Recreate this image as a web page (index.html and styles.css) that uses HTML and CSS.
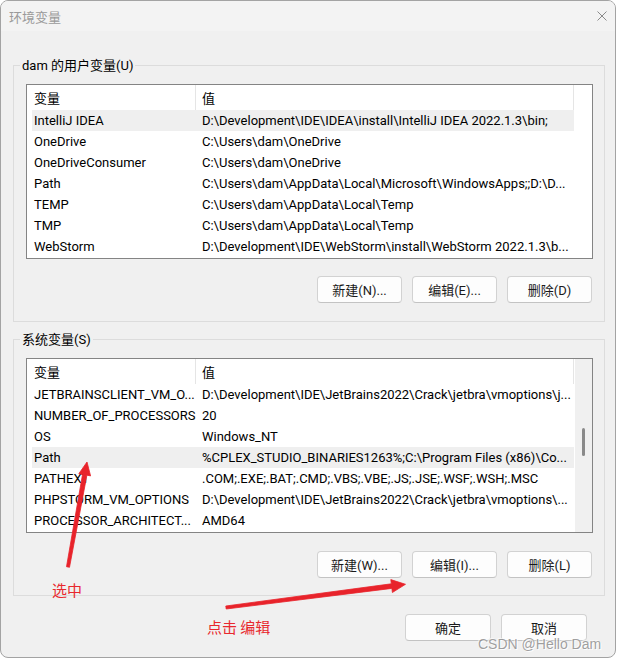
FILE: index.html
```html
<!DOCTYPE html>
<html lang="zh-CN">
<head>
<meta charset="utf-8">
<title>环境变量</title>
<link rel="stylesheet" href="styles.css">
</head>
<body>
<div class="page">
  <div class="window">
    <div class="titlebar">
      <span class="title">环境变量</span>
      <svg class="close" width="10" height="10" viewBox="0 0 10 10"><path d="M0.5 0.5 L9.5 9.5 M9.5 0.5 L0.5 9.5" stroke="#8a8a8a" stroke-width="1" fill="none"/></svg>
    </div>
    <div class="content">
      <section class="group group-user">
        <div class="group-label">dam 的用户变量(U)</div>
        <div class="listview">
          <div class="lv-main">
            <div class="lv-header"><div class="hcell c1">变量</div><div class="hcell c2">值</div></div>
            <div class="row selected"><div class="cell c1">IntelliJ IDEA</div><div class="cell c2">D:\Development\IDE\IDEA\install\IntelliJ IDEA 2022.1.3\bin;</div></div>
            <div class="row"><div class="cell c1">OneDrive</div><div class="cell c2">C:\Users\dam\OneDrive</div></div>
            <div class="row"><div class="cell c1">OneDriveConsumer</div><div class="cell c2">C:\Users\dam\OneDrive</div></div>
            <div class="row"><div class="cell c1">Path</div><div class="cell c2">C:\Users\dam\AppData\Local\Microsoft\WindowsApps;;D:\D...</div></div>
            <div class="row"><div class="cell c1">TEMP</div><div class="cell c2">C:\Users\dam\AppData\Local\Temp</div></div>
            <div class="row"><div class="cell c1">TMP</div><div class="cell c2">C:\Users\dam\AppData\Local\Temp</div></div>
            <div class="row"><div class="cell c1">WebStorm</div><div class="cell c2">D:\Development\IDE\WebStorm\install\WebStorm 2022.1.3\b...</div></div>
          </div>
          <div class="lv-scroll"></div>
        </div>
        <div class="buttons">
          <button class="btn">新建(N)...</button>
          <button class="btn">编辑(E)...</button>
          <button class="btn">删除(D)</button>
        </div>
      </section>
      <section class="group group-system">
        <div class="group-label">系统变量(S)</div>
        <div class="listview">
          <div class="lv-main">
            <div class="lv-header"><div class="hcell c1">变量</div><div class="hcell c2">值</div></div>
            <div class="row"><div class="cell c1">JETBRAINSCLIENT_VM_O...</div><div class="cell c2">D:\Development\IDE\JetBrains2022\Crack\jetbra\vmoptions\j...</div></div>
            <div class="row"><div class="cell c1">NUMBER_OF_PROCESSORS</div><div class="cell c2">20</div></div>
            <div class="row"><div class="cell c1">OS</div><div class="cell c2">Windows_NT</div></div>
            <div class="row selected"><div class="cell c1">Path</div><div class="cell c2">%CPLEX_STUDIO_BINARIES1263%;C:\Program Files (x86)\Co...</div></div>
            <div class="row"><div class="cell c1">PATHEXT</div><div class="cell c2">.COM;.EXE;.BAT;.CMD;.VBS;.VBE;.JS;.JSE;.WSF;.WSH;.MSC</div></div>
            <div class="row"><div class="cell c1">PHPSTORM_VM_OPTIONS</div><div class="cell c2">D:\Development\IDE\JetBrains2022\Crack\jetbra\vmoptions\...</div></div>
            <div class="row"><div class="cell c1">PROCESSOR_ARCHITECT...</div><div class="cell c2">AMD64</div></div>
          </div>
          <div class="lv-scroll track"><div class="thumb"></div></div>
        </div>
        <div class="buttons">
          <button class="btn">新建(W)...</button>
          <button class="btn">编辑(I)...</button>
          <button class="btn">删除(L)</button>
        </div>
      </section>
      <div class="dialog-buttons">
        <button class="btn btn-dialog">确定</button>
        <button class="btn btn-dialog">取消</button>
      </div>
    </div>
  </div>

  <svg class="annotations" width="618" height="659" viewBox="0 0 618 659">
    <polygon fill="#e8232b" stroke="#e8232b" stroke-width="0.8" stroke-linejoin="round"
      points="66.5,566.7 82.5,474.4 78.8,473.7 87,462 90.6,475.9 86.9,475.2 69.5,567.3"/>
    <polygon fill="#e8232b" stroke="#e8232b" stroke-width="0.8" stroke-linejoin="round"
      points="225.8,606 391.3,583.8 390.8,579.6 405.5,584.3 392.4,592.5 391.9,588.4 226.2,609"/>
  </svg>
  <div class="note note-select">选中</div>
  <div class="note note-click">点击 编辑</div>
  <div class="watermark">CSDN @Hello Dam</div>
</div>
</body>
</html>
```
FILE: styles.css
```css
body {
  margin: 0;
  background: #ffffff;
  font-family: Roboto, "Noto Sans CJK SC", sans-serif;
  font-size: 13px;
  color: #000;
}

.page {
  position: relative;
  width: 618px;
  height: 659px;
  overflow: hidden;
}

.window {
  width: 616px;
  height: 658px;
  box-sizing: border-box;
  border: 1px solid #a3a3a3;
  border-radius: 8px;
  background: #f0f0f0;
  overflow: hidden;
  display: flex;
  flex-direction: column;
}

.titlebar {
  height: 30px;
  flex: none;
  background: #f3f3f3;
  display: flex;
  align-items: center;
  justify-content: space-between;
  padding: 0 8px;
}

.title {
  color: #9a9a9a;
  font-size: 13px;
  font-family: "Noto Sans CJK SC", sans-serif;
}

.close {
  display: block;
}

.content {
  padding-top: 34px;
  display: flex;
  flex-direction: column;
}

.group {
  margin: 0 10px 0 12px;
  border: 1px solid #dcdcdc;
  padding: 0 11px 18px 12px;
}

.group-system {
  margin-top: 17px;
  padding-bottom: 17px;
}

.group-label {
  width: fit-content;
  height: 16px;
  line-height: 16px;
  margin: -8px 0 0 -6px;
  padding: 0 2px;
  background: #f0f0f0;
}

.listview {
  margin-top: 10px;
  height: 175px;
  box-sizing: border-box;
  border: 1px solid #848484;
  background: #fff;
  display: flex;
}

.lv-main {
  width: 547px;
  flex: none;
  overflow: hidden;
}

.lv-header {
  height: 25px;
  display: flex;
  padding-left: 5px;
}

.hcell {
  display: flex;
  align-items: center;
  box-sizing: border-box;
  border-right: 1px solid #e5e5e5;
}

.hcell.c1 {
  width: 164px;
  flex: none;
  padding-left: 2px;
}

.hcell.c2 {
  flex: 1;
  padding-left: 6px;
}

.row {
  height: 21px;
  display: flex;
  align-items: center;
  margin-left: 5px;
}

.row.selected {
  background: #efefef;
}

.cell {
  white-space: nowrap;
  overflow: hidden;
}

.cell.c1 {
  width: 164px;
  flex: none;
  box-sizing: border-box;
  padding-left: 2px;
}

.cell.c2 {
  flex: 1;
  min-width: 0;
  padding-left: 6px;
}

.lv-scroll {
  width: 18px;
  flex: none;
  box-sizing: border-box;
  border-left: 1px solid #fff;
}

.lv-scroll.track {
  background: #f0f0f0;
}

.thumb {
  width: 3px;
  height: 28px;
  margin: 69px auto 0;
  background: #8a8a8a;
  border-radius: 2px;
}

.buttons {
  display: flex;
  justify-content: flex-end;
  gap: 10px;
  margin: 17px 1px 0 0;
}

.group-system .buttons {
  margin-top: 18px;
}

.btn {
  width: 85px;
  height: 27px;
  box-sizing: border-box;
  padding: 0;
  border: 1px solid #d2d2d2;
  border-bottom-color: #c3c3c3;
  border-radius: 4px;
  background: #fdfdfd;
  font: inherit;
  color: #1a1a1a;
  display: flex;
  align-items: center;
  justify-content: center;
}

.dialog-buttons {
  display: flex;
  justify-content: flex-end;
  gap: 10px;
  margin: 18px 28px 0 0;
}

.btn-dialog {
  width: 86px;
}

.annotations {
  position: absolute;
  left: 0;
  top: 0;
  pointer-events: none;
}

.note {
  position: absolute;
  font-family: "Noto Sans CJK SC", sans-serif;
  font-size: 15px;
  line-height: 15px;
  color: #e8282e;
  white-space: nowrap;
}

.note-select {
  left: 52px;
  top: 582px;
}

.note-click {
  left: 207px;
  top: 619px;
}

.watermark {
  position: absolute;
  left: 478px;
  top: 636px;
  font-family: "Liberation Sans", sans-serif;
  font-size: 14px;
  line-height: 16px;
  color: rgba(130, 130, 130, 0.75);
  text-shadow: 1px 1px 0 rgba(255, 255, 255, 0.9), -1px -1px 0 rgba(255, 255, 255, 0.6);
  white-space: nowrap;
}
```
